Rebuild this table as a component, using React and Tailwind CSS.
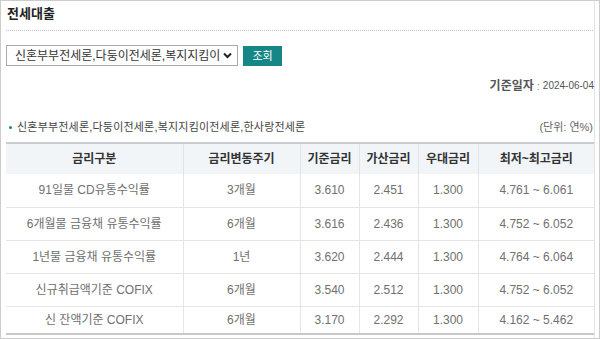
import React from 'react';

const rows = [
  { name: '91일물 CD유통수익률', period: '3개월', base: '3.610', add: '2.451', pref: '1.300', range: '4.761 ~ 6.061' },
  { name: '6개월물 금융채 유통수익률', period: '6개월', base: '3.616', add: '2.436', pref: '1.300', range: '4.752 ~ 6.052' },
  { name: '1년물 금융채 유통수익률', period: '1년', base: '3.620', add: '2.444', pref: '1.300', range: '4.764 ~ 6.064' },
  { name: '신규취급액기준 COFIX', period: '6개월', base: '3.540', add: '2.512', pref: '1.300', range: '4.752 ~ 6.052' },
  { name: '신 잔액기준 COFIX', period: '6개월', base: '3.170', add: '2.292', pref: '1.300', range: '4.162 ~ 5.462' },
];

const font = { fontFamily: '"Liberation Sans", "Noto Sans CJK KR", sans-serif' };

const App = () => {
  return (
    <div className="w-[600px] h-[339px] border border-[#cccccc] bg-white overflow-hidden" style={font}>
      <div className="w-[594px] h-full border-r border-[#e4e4e4] pl-[5px]">
        <h1 className="pt-[5px] pl-[1px] text-[13px] leading-[16px] font-bold text-[#222]">전세대출</h1>
        <div className="mt-[8px] mr-[1px] border-t border-dotted border-[#c4c4c4]" />

        <div className="mt-[14px] flex items-center gap-[5px]">
          <div className="w-[232px] h-[21px] border border-[#a9a9a9] flex items-center justify-between pl-[8px] pr-[5px] text-[12px] text-[#333] bg-white">
            <span className="min-w-0 whitespace-nowrap overflow-hidden">신혼부부전세론,다둥이전세론,복지지킴이</span>
            <svg width="9" height="7" viewBox="0 0 9 7" className="shrink-0 ml-[2px]">
              <polyline points="1,1.5 4.5,5 8,1.5" fill="none" stroke="#222" strokeWidth="2" />
            </svg>
          </div>
          <button className="w-[39px] h-[20px] bg-[#168686] text-white text-[11px] leading-[20px]">조회</button>
        </div>

        <div className="mt-[14px] h-[12px] flex justify-end items-center leading-[12px]">
          <span className="text-[12px] font-bold text-[#555]">기준일자</span>
          <span className="text-[11px] text-[#888] ml-[3px] mr-[3px]">:</span>
          <span className="text-[10px] text-[#555]">2024-06-04</span>
        </div>

        <div className="mt-[29px] h-[12px] flex items-center justify-between text-[11px] leading-[12px] text-[#444]">
          <div className="flex items-center">
            <span className="w-[3px] h-[3px] rounded-full bg-[#168686] ml-[3px] mr-[5px]" />
            <span className="tracking-[0.2px]">신혼부부전세론,다둥이전세론,복지지킴이전세론,한사랑전세론</span>
          </div>
          <span className="text-[#666] pr-[1px]">(단위: 연%)</span>
        </div>

        <table className="mt-[9px] w-[588px] table-fixed border-collapse text-[12px]">
          <colgroup>
            <col className="w-[177px]" />
            <col className="w-[117px]" />
            <col className="w-[59px]" />
            <col className="w-[59px]" />
            <col className="w-[60px]" />
            <col className="w-[116px]" />
          </colgroup>
          <thead>
            <tr className="h-[31px] bg-[#f2f5f8] border-t-2 border-[#c8cdd2] text-[#333] font-bold">
              <th className="border-r border-[#e2e2e2]">금리구분</th>
              <th className="border-r border-[#e2e2e2]">금리변동주기</th>
              <th className="border-r border-[#e2e2e2]">기준금리</th>
              <th className="border-r border-[#e2e2e2]">가산금리</th>
              <th className="border-r border-[#e2e2e2]">우대금리</th>
              <th>최저~최고금리</th>
            </tr>
          </thead>
          <tbody className="text-[#707070] text-center">
            {rows.map((r, i) => (
              <tr
                key={i}
                className={i === rows.length - 1 ? 'h-[28px] border-b-2 border-[#c8c8c8]' : 'h-[33px] border-b border-[#e4e4e4]'}
              >
                <td className="border-r border-[#e4e4e4]">{r.name}</td>
                <td className="border-r border-[#e4e4e4]">{r.period}</td>
                <td className="border-r border-[#e4e4e4]">{r.base}</td>
                <td className="border-r border-[#e4e4e4]">{r.add}</td>
                <td className="border-r border-[#e4e4e4]">{r.pref}</td>
                <td>{r.range}</td>
              </tr>
            ))}
          </tbody>
        </table>
      </div>
    </div>
  );
};

export default App;
